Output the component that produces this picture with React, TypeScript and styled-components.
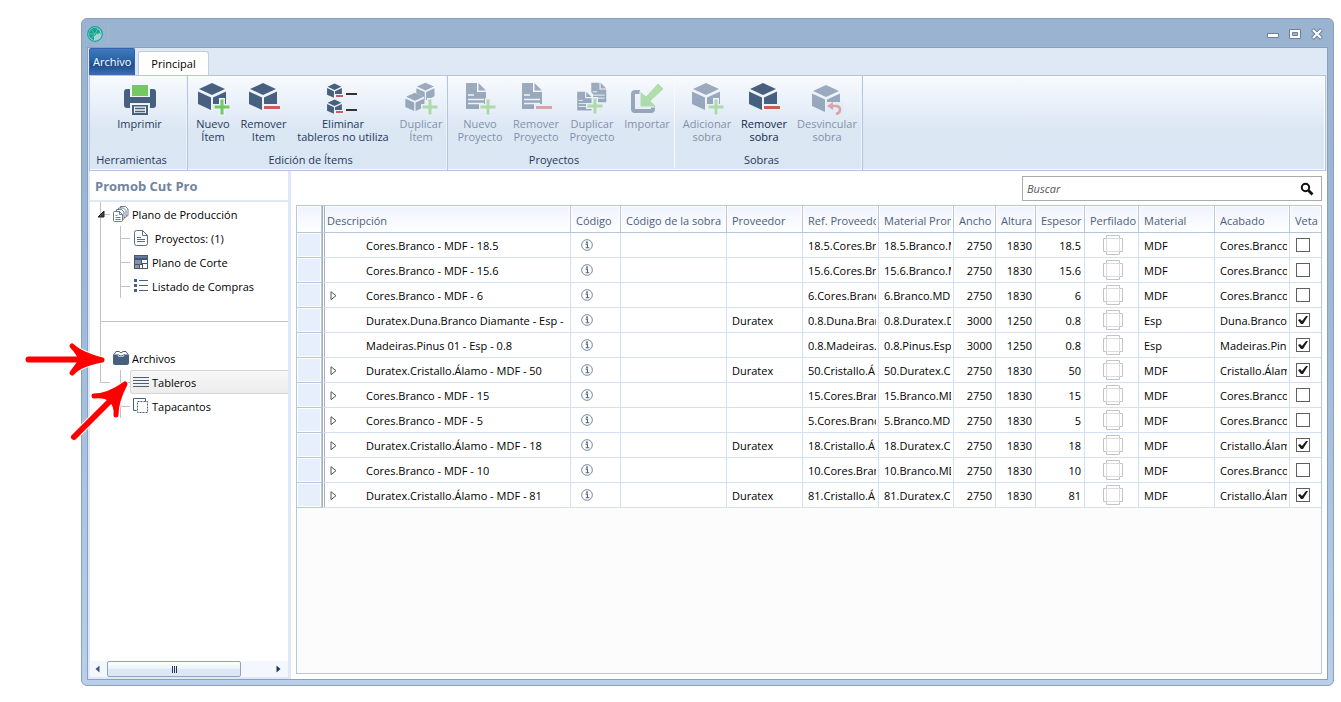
import React from 'react';
import styled, { createGlobalStyle, css } from 'styled-components';

const font = '"Open Sans", "Noto Sans", sans-serif';
const navy = '#48607f';
const green = '#76c661';
const red = '#cb5c58';
const line = '#b8c6d9';
const cellLine = '#d3e1f3';

const GlobalStyle = createGlobalStyle`
  * { box-sizing: border-box; }
  body { margin: 0; background: #fff; }
  body, button, input, table { font: 11px/14px ${font}; color: #000; }
  button { border: 0; padding: 0; background: none; }
  ul { list-style: none; margin: 0; padding: 0; }
`;

const Page = styled.div`
  position: relative;
  display: flex;
  min-height: 100vh;
  padding: 18px 7px 16px 81px;
`;

const Window = styled.div`
  flex: 1;
  min-width: 0;
  display: flex;
  flex-direction: column;
  padding: 0 5px 5px;
  border: 1px solid #8ba0bf;
  border-radius: 6px;
  background: linear-gradient(#9ab3d1, #9db9d6 40%, #b9cfea);
`;

const TitleBar = styled.header`
  display: flex;
  align-items: center;
  height: 28px;
  padding-top: 2px;
  flex: none;
`;

const TitleMark = styled.span`
  display: flex;
  align-items: center;
  width: 22px;
  height: 18px;
  border-right: 1px solid #a7b8cd;
`;

const WindowButtons = styled.div`
  display: flex;
  gap: 10px;
  margin-left: auto;
  padding-right: 5px;
  button, svg { display: block; }
`;

const Client = styled.div`
  flex: 1;
  display: flex;
  flex-direction: column;
  border: 1px solid #8ba0bf;
  background: #dfe8f5;
`;

const Tabs = styled.nav`
  display: flex;
  align-items: flex-end;
  gap: 3px;
  height: 27px;
  padding-left: 1px;
`;

const Tab = styled.button<{ $file?: boolean }>`
  height: 24px;
  padding: 0 12px;
  border: 1px solid #c0cfe4;
  border-bottom: 0;
  border-radius: 3px 3px 0 0;
  background: #fff;
  ${(p) => p.$file && css`
    height: 27px;
    padding: 0 3px;
    color: #fff;
    border-color: #3561b0;
    border-radius: 2px 2px 0 0;
    background: linear-gradient(#3f7abd, #2c64a8 40%, #1f4f8e 62%, #3d6eb9);
  `}
`;

const Ribbon = styled.div`
  display: flex;
  height: 96px;
  margin: 0 1px;
  border: 1px solid #b3c4de;
  background: linear-gradient(#f8fbfe, #e6eef8 35%, #dce7f4 55%, #dae6f3);
  box-shadow: inset -1px -1px #fff, inset 0 1px #fff;
`;

const Group = styled.section<{ $soft?: boolean }>`
  display: flex;
  flex-direction: column;
  border-right: 1px solid ${(p) => (p.$soft ? '#f7fafd' : '#b3c4de')};
  box-shadow: inset -1px 0 ${(p) => (p.$soft ? 'transparent' : '#eef4fb')};
`;

const GroupButtons = styled.div<{ $left?: number; $right?: number }>`
  display: flex;
  flex: 1;
  padding: 6px ${(p) => p.$right || 0}px 0 ${(p) => p.$left || 0}px;
`;

const GroupName = styled.h2`
  margin: 0;
  padding: 0 14px 2px 0;
  font: 11px/17px ${font};
  text-align: center;
  color: #1e395b;
`;

const RibbonButton = styled.button<{ $w: number; $strong?: boolean }>`
  display: flex;
  flex-direction: column;
  align-items: center;
  width: ${(p) => p.$w}px;
  line-height: 13px;
  white-space: pre;
  color: ${(p) => (p.$strong ? '#12284a' : '#1e395b')};
  svg { flex: none; margin-bottom: 1px; }
  &:disabled { opacity: 0.5; }
`;

const Body = styled.div`
  flex: 1;
  display: flex;
`;

const Side = styled.aside`
  width: 203px;
  flex: none;
  display: flex;
  flex-direction: column;
  padding-left: 2px;
  border-right: 3px solid #dfe8f6;
  border-bottom: 2px solid #dfe8f6;
  background: #fff;
  box-shadow: inset 2px 0 #dfe8f6;
`;

const SideTitle = styled.h1`
  margin: 0;
  padding: 1px 0 0 5px;
  font: bold 13px/28px ${font};
  color: #70849c;
  border-bottom: 2px solid #dfe8f6;
`;

const Tree = styled.ul`
  flex: 1;
`;

const Row = styled.li<{ $rule?: boolean }>`
  display: flex;
  height: 24px;
  ${(p) => p.$rule && css`
    background: linear-gradient(#c3c3c3, #c3c3c3) 10px 100% / 100% 1px no-repeat;
  `}
`;

const dot = 'linear-gradient(#c3c3c3, #c3c3c3)';
const guides = {
  none: 'none',
  trunk: `${dot} 10px 0 / 1px 100% no-repeat`,
  stub: `${dot} 100% 12px / 6px 1px no-repeat, ${dot} 10px 0 / 1px 100% no-repeat`,
  elbow: `${dot} 10px 0 / 1px 50% no-repeat, ${dot} 10px 12px / 100% 1px no-repeat`,
  branch: `${dot} 10px 0 / 1px 100% no-repeat, ${dot} 10px 12px / 100% 1px no-repeat`,
};

const Guide = styled.span<{ $kind: keyof typeof guides }>`
  display: flex;
  align-items: center;
  width: 20px;
  padding-left: 6px;
  flex: none;
  background: ${(p) => guides[p.$kind]};
`;

const Node = styled.button<{ $selected?: boolean }>`
  display: flex;
  align-items: center;
  gap: 3px;
  flex: 1;
  padding-left: 2px;
  text-align: left;
  white-space: pre;
  border: 1px solid transparent;
  border-right: 0;
  svg { flex: none; }
  ${(p) => p.$selected && css`
    border-color: #d6d6d6;
    border-radius: 3px 0 0 3px;
    background: linear-gradient(#f8f8f8, #ececec);
  `}
`;

const NodeText = styled.span`
  padding-top: 1px;
`;

const ScrollRow = styled.div`
  display: flex;
  align-items: center;
  height: 16px;
  padding: 0 7px 0 5px;
  background: #f4f8fe;
  button, svg { display: block; }
`;

const ScrollTrack = styled.div`
  flex: 1;
  padding: 0 35px 0 7px;
`;

const Thumb = styled.div`
  display: flex;
  justify-content: center;
  align-items: center;
  gap: 1px;
  height: 16px;
  border: 1px solid #8fa3c0;
  border-radius: 2px;
  background: linear-gradient(#fff, #eaf1f9 48%, #dce7f4 52%, #dde8f5);
  i { width: 1px; height: 7px; background: #1e395b; }
`;

const Main = styled.main`
  flex: 1;
  min-width: 0;
  display: flex;
  flex-direction: column;
  gap: 4px;
  padding: 5px 5px 5px;
  background: #fff;
`;

const SearchBox = styled.label`
  display: flex;
  align-items: center;
  align-self: flex-end;
  width: 300px;
  height: 25px;
  padding: 0 7px 0 4px;
  border: 1px solid #ababab;
  background: #fff;
`;

const SearchInput = styled.input`
  flex: 1;
  border: 0;
  padding: 0;
  outline: 0;
  background: none;
  &::placeholder { color: #555; opacity: 1; font-style: italic; }
`;

const Grid = styled.div`
  flex: 1;
  border: 1px solid ${line};
  background: #fcfcfc;
`;

const Table = styled.table`
  width: 100%;
  table-layout: fixed;
  border-collapse: separate;
  border-spacing: 0;
  background: #fff;
`;

const Col = styled.col<{ $w?: number }>`
  width: ${(p) => (p.$w ? `${p.$w}px` : 'auto')};
`;

const edge = css`
  border-left: 3px double #a3b1c4;
`;

const Th = styled.th<{ $first?: boolean }>`
  height: 27px;
  padding: 4px 2px 0 5px;
  font-weight: normal;
  text-align: left;
  color: #4c607a;
  border: 1px solid ${line};
  border-width: 0 1px 1px 0;
  background: linear-gradient(#eef3fc, #fff);
  box-shadow: inset 1px 1px #fff, inset -1px 0 #fff;
  ${(p) => p.$first && css`${edge} padding-left: 2px;`}
  &:last-child { border-right: 0; }
`;

const Td = styled.td<{ $right?: boolean; $first?: boolean; $center?: boolean; $info?: boolean }>`
  height: 25px;
  padding: ${(p) => (p.$center ? '0 0 0 2px' : p.$right ? '2px 3px 0 5px' : '2px 2px 0 5px')};
  text-align: ${(p) => (p.$right ? 'right' : p.$center ? 'center' : 'left')};
  border: 1px solid ${cellLine};
  border-width: 0 1px 1px 0;
  svg { display: block; ${(p) => p.$center && 'margin: auto;'} }
  ${(p) => p.$first && css`${edge}`}
  ${(p) => p.$info && css`padding: 0 0 0 10px;`}
  &:last-child { border-right: 0; }
`;

const RowHead = styled.th`
  height: 25px;
  padding: 0;
  border: 1px solid ${line};
  border-width: 0 1px 1px 0;
  background: #e7eefc;
  box-shadow: inset 0 0 0 1px #fff;
`;

const Clip = styled.div`
  overflow: hidden;
  white-space: nowrap;
`;

const Name = styled.div`
  display: flex;
  align-items: center;
`;

const Expander = styled.button`
  width: 36px;
  height: 12px;
  flex: none;
`;

const Tick = styled.input`
  appearance: none;
  display: block;
  width: 14px;
  height: 14px;
  margin: 0 0 0 4px;
  border: 1px solid #5f5f5f;
  background: #fff;
  &:checked::before {
    content: '';
    display: block;
    width: 12px;
    height: 12px;
    background: #1a1a1a;
    clip-path: polygon(1px 6px, 3px 5px, 5px 7px, 9px 2px, 11px 2px, 6px 10px, 4px 10px);
  }
`;

const Arrows = styled.svg`
  position: absolute;
  left: 20px;
  top: 335px;
  pointer-events: none;
`;

/* ---- ribbon drawings ---- */

const Cube = ({ x = 0, y = 0, s = 1 }: { x?: number; y?: number; s?: number }) => (
  <g transform={`translate(${x} ${y}) scale(${s})`} fill={navy}>
    <path d="M3 7 16 1l13 6-13 6z" />
    <path d="M2 9.500l13 6V28L2 22z" />
    <path d="M30 9.500l-13 6V28l13-6z" />
  </g>
);

const Plus = ({ x = 26, y = 25 }: { x?: number; y?: number }) => (
  <g transform={`translate(${x} ${y})`}>
    <path d="M-3-9h6v6h6v6h-6v6h-6v-6h-6v-6h6z" fill="#eaf1f9" />
    <path d="M-1.500-7.500h3v6h6v3h-6v6h-3v-6h-6v-3h6z" fill={green} />
  </g>
);

const Minus = () => (
  <g>
    <path d="M15 22h19v6H15z" fill="#eaf1f9" />
    <path d="M17 24h16v3H17z" fill={red} />
  </g>
);

const Sheet = ({ x = 0, y = 0, s = 1 }: { x?: number; y?: number; s?: number }) => (
  <g transform={`translate(${x} ${y}) scale(${s})`}>
    <path d="M3 1h11v9h9v17H3z" fill={navy} />
    <path d="M15.500 1l7.500 7.500h-7.500z" fill={navy} />
    <path d="M5 13h6M5 17.500h16M5 21.500h16" stroke="#f0f5fb" strokeWidth="1.300" fill="none" />
  </g>
);

const drawings: Record<string, React.ReactNode> = {
  printer: (
    <>
      <path d="M4 7h3v8h20V7h3q3 0 3 3v13q0 3-3 3h-3v-5H7v5H4q-3 0-3-3V10q0-3 3-3z" fill={navy} />
      <path d="M9 3h16v11H9z" fill={green} />
      <path d="M8 22h18v11H8z" fill="#f1f6fb" />
      <path d="M9 23h16v10H9z" fill={navy} />
      <path d="M11 24.500h12v6.500H11z" fill="#f1f6fb" />
      <path d="M12 26.500h10M12 29.500h10" stroke={navy} strokeWidth="1.500" />
    </>
  ),
  cubePlus: <><Cube /><Plus /></>,
  cubeMinus: <><Cube /><Minus /></>,
  purge: (
    <>
      <Cube y={1} s={0.53} />
      <Cube y={17} s={0.53} />
      <path d="M9 12h9v4H9zM9 28h9v4H9z" fill="#f1f6fb" />
      <path d="M10 13h7v2h-7zM10 29h7v2h-7z" fill={red} />
      <path d="M20 11h11v2H20zM20 27h11v2H20z" fill="#333" />
    </>
  ),
  cubesPlus: (
    <>
      <Cube x={11} s={0.65} />
      <path d="M1 15l9-5 10 5v8H1z" fill="#eef4fa" />
      <Cube y={10} s={0.68} />
      <Plus />
    </>
  ),
  sheetPlus: <><Sheet /><Plus x={25} /></>,
  sheetMinus: <><Sheet /><Minus /></>,
  sheetsPlus: (
    <>
      <Sheet x={14} s={0.75} />
      <path d="M1 8h13l4 4v18H1z" fill="#eef4fa" />
      <Sheet y={9} s={0.72} />
      <Plus x={20} y={24} />
    </>
  ),
  importArrow: (
    <>
      <path d="M10 10H5q-2 0-2 2v15q0 2 2 2h16q2 0 2-2v-2" fill="none" stroke={navy} strokeWidth="4" />
      <path d="M10 9l6 5L28 1l6 6-13 12 6 6H10z" fill={green} stroke="#edf3fa" strokeWidth="1" />
    </>
  ),
  cubeUndo: (
    <>
      <Cube y={2} />
      <path d="M16 20h18v13H16z" fill="#e2ebf6" />
      <path d="M20 24h6q4 0 4 4 0 3-4 4" fill="none" stroke={red} strokeWidth="2.500" />
      <path d="M17 24l6-4v8z" fill={red} />
    </>
  ),
};

const BigIcon = ({ name }: { name: string }) => (
  <svg width="34" height="34" viewBox="0 0 34 34" aria-hidden="true">{drawings[name]}</svg>
);

type Action = { label: string; icon: string; w: number; off?: boolean; strong?: boolean };
const groups: { name: string; left?: number; right?: number; soft?: boolean; actions: Action[] }[] = [
  { name: 'Herramientas', left: 2, actions: [{ label: 'Imprimir', icon: 'printer', w: 95 }] },
  {
    name: 'Edición de Ítems', right: 2, actions: [
      { label: 'Nuevo\nÍtem', icon: 'cubePlus', w: 50 },
      { label: 'Remover\nItem', icon: 'cubeMinus', w: 51 },
      { label: 'Eliminar\ntableros no utiliza', icon: 'purge', w: 108 },
      { label: 'Duplicar\nÍtem', icon: 'cubesPlus', w: 48, off: true },
    ],
  },
  {
    name: 'Proyectos', left: 4, soft: true, actions: [
      { label: 'Nuevo\nProyecto', icon: 'sheetPlus', w: 56, off: true },
      { label: 'Remover\nProyecto', icon: 'sheetMinus', w: 56, off: true },
      { label: 'Duplicar\nProyecto', icon: 'sheetsPlus', w: 56, off: true },
      { label: 'Importar', icon: 'importArrow', w: 54, off: true },
    ],
  },
  {
    name: 'Sobras', left: 3, actions: [
      { label: 'Adicionar\nsobra', icon: 'cubePlus', w: 58, off: true },
      { label: 'Remover\nsobra', icon: 'cubeMinus', w: 56, strong: true },
      { label: 'Desvincular\nsobra', icon: 'cubeUndo', w: 70, off: true },
    ],
  },
];

/* ---- tree drawings ---- */

const treeIcons: Record<string, React.ReactNode> = {
  stack: (
    <g fill="#fff" stroke={navy} strokeWidth=".8">
      <path d="M7.500.500h5l2.500 2.500v6q0 1-1 1H7.500z" />
      <path d="M5.500 2h5L13 4.500v6q0 1-1 1H5.500z" />
      <path d="M3.500 3.500h5L11 6v6.500q0 1-1 1H3.500z" />
      <path d="M1.500 5.500h5l3 3v6q0 1-1 1h-7q-1 0-1-1v-8q0-1 1-1z" />
      <path d="M6.500 5.500v3h3M2.500 9.500h2M2.500 11.500h5M2.500 13.500h5" fill="none" />
    </g>
  ),
  page: (
    <g fill="none" stroke={navy} strokeWidth=".9">
      <path d="M3.500.500h6l5 5v8q0 2-2 2h-9q-2 0-2-2v-11q0-2 2-2zM9.500.500v5h5M4 7.500h4M4 9.500h8M4 11.500h8" />
    </g>
  ),
  plan: (
    <>
      <path d="M1 1h14v14H1z" fill="#4b5563" />
      <path d="M2 2h12v2H2z" fill="#5c7ba6" />
      <path d="M2 6h6v4H2z" fill="#7d93b3" />
      <path d="M9 6h5v3H9zM7 11h2v3H7zM10 10h4v4h-4z" fill="#fff" />
      <path d="M2 11h4v3H2z" fill="#8a98ab" />
    </>
  ),
  list: (
    <>
      <path d="M1 1h3v3H1zM1 6h3v3H1zM1 11h3v3H1z" fill={navy} />
      <path d="M6 2.500h9M6 7.500h9M6 12.500h9" stroke={navy} />
    </>
  ),
  drawer: (
    <>
      <path d="M0 4.500h4.500q0 2.500 3.500 2.500t3.500-2.500H16V13q0 2-2 2H2q-2 0-2-2z" fill={navy} />
      <path d="M1 4.500L3 1.500h3l2 1.500 2-1.500h3l2 3M4.500 4q1 2 3.500 2t3.500-2" fill="none" stroke={navy} />
    </>
  ),
  boards: <path d="M0 3.500h16M0 6.500h16M0 9.500h16M0 12.500h16" stroke={navy} strokeWidth="1" />,
  edges: (
    <g fill="none" stroke={navy}>
      <path d="M3.500 12.500h-3V.500h12v3" />
      <path d="M4.500 3.500h10v11h-10z" strokeDasharray="2 1" />
    </g>
  ),
};

const TreeNode = ({ icon, text, selected }: { icon: string; text: string; selected?: boolean }) => (
  <Node $selected={selected}>
    <svg width="16" height="16" viewBox="0 0 16 16" aria-hidden="true">{treeIcons[icon]}</svg>
    <NodeText>{text}</NodeText>
  </Node>
);

/* ---- grid data ---- */

const columns: { title: string; w?: number }[] = [
  { title: 'Descripción' },
  { title: 'Código', w: 50 },
  { title: 'Código de la sobra', w: 106 },
  { title: 'Proveedor', w: 76 },
  { title: 'Ref. Proveedor', w: 76 },
  { title: 'Material Prom', w: 75 },
  { title: 'Ancho', w: 42 },
  { title: 'Altura', w: 40 },
  { title: 'Espesor', w: 49 },
  { title: 'Perfilado', w: 54 },
  { title: 'Material', w: 76 },
  { title: 'Acabado', w: 75 },
  { title: 'Veta', w: 31 },
];

type Board = [boolean, string, string, string, string, string, string, string, string, string, boolean];
const boards: Board[] = [
  [false, 'Cores.Branco - MDF - 18.5', '', '18.5.Cores.Bra', '18.5.Branco.M', '2750', '1830', '18.5', 'MDF', 'Cores.Branco', false],
  [false, 'Cores.Branco - MDF - 15.6', '', '15.6.Cores.Bra', '15.6.Branco.M', '2750', '1830', '15.6', 'MDF', 'Cores.Branco', false],
  [true, 'Cores.Branco - MDF - 6', '', '6.Cores.Branco', '6.Branco.MD', '2750', '1830', '6', 'MDF', 'Cores.Branco', false],
  [false, 'Duratex.Duna.Branco Diamante - Esp -', 'Duratex', '0.8.Duna.Bran', '0.8.Duratex.D', '3000', '1250', '0.8', 'Esp', 'Duna.Branco', true],
  [false, 'Madeiras.Pinus 01 - Esp - 0.8', '', '0.8.Madeiras.', '0.8.Pinus.Esp', '3000', '1250', '0.8', 'Esp', 'Madeiras.Pin', true],
  [true, 'Duratex.Cristallo.Álamo - MDF - 50', 'Duratex', '50.Cristallo.Á', '50.Duratex.Cr', '2750', '1830', '50', 'MDF', 'Cristallo.Álam', true],
  [true, 'Cores.Branco - MDF - 15', '', '15.Cores.Bran', '15.Branco.MD', '2750', '1830', '15', 'MDF', 'Cores.Branco', false],
  [true, 'Cores.Branco - MDF - 5', '', '5.Cores.Branco', '5.Branco.MD', '2750', '1830', '5', 'MDF', 'Cores.Branco', false],
  [true, 'Duratex.Cristallo.Álamo - MDF - 18', 'Duratex', '18.Cristallo.Á', '18.Duratex.Cr', '2750', '1830', '18', 'MDF', 'Cristallo.Álam', true],
  [true, 'Cores.Branco - MDF - 10', '', '10.Cores.Bran', '10.Branco.MD', '2750', '1830', '10', 'MDF', 'Cores.Branco', false],
  [true, 'Duratex.Cristallo.Álamo - MDF - 81', 'Duratex', '81.Cristallo.Á', '81.Duratex.Cr', '2750', '1830', '81', 'MDF', 'Cristallo.Álam', true],
];

const BoardRow = ({ board }: { board: Board }) => {
  const [open, name, supplier, ref, promob, width, height, thick, material, finish, grain] = board;
  return (
    <tr>
      <RowHead />
      <Td $first>
        <Name>
          <Expander as={open ? 'button' : 'span'} aria-label={open ? 'Expandir' : undefined}>
            {open && (
              <svg width="8" height="10" viewBox="0 0 8 10">
                <path d="M1 .700v8L6 4.700z" fill="#fff" stroke="#555" />
              </svg>
            )}
          </Expander>
          <Clip>{name}</Clip>
        </Name>
      </Td>
      <Td $info>
        <svg width="12" height="12" viewBox="0 0 13 13">
          <circle cx="6.500" cy="6.500" r="5.800" fill="#fff" stroke="#6d8098" />
          <path d="M5 5.500h2v4M5 9.500h4" fill="none" stroke="#54687f" strokeWidth="1.300" />
          <circle cx="6.500" cy="3.500" r="1" fill="#54687f" />
        </svg>
      </Td>
      <Td />
      <Td><Clip>{supplier}</Clip></Td>
      <Td><Clip>{ref}</Clip></Td>
      <Td><Clip>{promob}</Clip></Td>
      <Td $right>{width}</Td>
      <Td $right>{height}</Td>
      <Td $right>{thick}</Td>
      <Td $center>
        <svg width="20" height="20" viewBox="0 0 20 20" fill="none" stroke="#c4c4c4">
          <path d="M3.500.500h13v19h-13zM.500 3.500h19v13H.500z" />
          <path d="M3.500 3.500h13v13h-13z" fill="#fff" stroke="#dcdcdc" />
        </svg>
      </Td>
      <Td><Clip>{material}</Clip></Td>
      <Td><Clip>{finish}</Clip></Td>
      <Td $center><Tick type="checkbox" defaultChecked={grain} aria-label="Veta" /></Td>
    </tr>
  );
};

export default function App() {
  return (
    <Page>
      <GlobalStyle />
      <Window>
        <TitleBar>
          <TitleMark>
            <svg width="16" height="16" viewBox="0 0 16 16">
              <circle cx="8" cy="8" r="7.300" fill="#a9d3d3" stroke="#15a596" strokeWidth="1.200" />
              <path d="M8 1.800A6.200 6.200 0 0 0 7 14.100V10l2-1 .500-2 1.500 1.500 1-2 1.500 2A6.200 6.200 0 0 0 8 1.800z" fill="#12a591" />
              <path d="M4 3.500l4 4.500 3-5.500M8 8H2M8 8l-4 5" stroke="#7fcdc4" strokeWidth=".6" fill="none" />
            </svg>
          </TitleMark>
          <WindowButtons>
            <button aria-label="Minimizar">
              <svg width="12" height="12" viewBox="0 0 12 12"><path d="M.500 5.500h11v4H.500z" fill="#fff" stroke="#6f7f95" /></svg>
            </button>
            <button aria-label="Restaurar">
              <svg width="12" height="12" viewBox="0 0 12 12">
                <path d="M.500 1.500h11v9H.500z" fill="#fff" stroke="#6f7f95" />
                <path d="M3.500 4.500h5v3h-5z" fill="#9ab3d1" stroke="#6f7f95" />
              </svg>
            </button>
            <button aria-label="Cerrar">
              <svg width="12" height="12" viewBox="0 0 12 12">
                <path d="M1.500 1.500l9 9M10.500 1.500l-9 9" stroke="#6f7f95" strokeWidth="4" />
                <path d="M2 2l8 8M10 2l-8 8" stroke="#fff" strokeWidth="2" />
              </svg>
            </button>
          </WindowButtons>
        </TitleBar>
        <Client>
          <Tabs>
            <Tab $file>Archivo</Tab>
            <Tab>Principal</Tab>
          </Tabs>
          <Ribbon>
            {groups.map((g) => (
              <Group key={g.name} $soft={g.soft}>
                <GroupButtons $left={g.left} $right={g.right}>
                  {g.actions.map((a) => (
                    <RibbonButton key={a.label} $w={a.w} $strong={a.strong} disabled={a.off}>
                      <BigIcon name={a.icon} />
                      {a.label}
                    </RibbonButton>
                  ))}
                </GroupButtons>
                <GroupName>{g.name}</GroupName>
              </Group>
            ))}
          </Ribbon>
          <Body>
            <Side>
              <SideTitle>Promob Cut Pro</SideTitle>
              <Tree>
                <Row>
                  <Guide $kind="stub">
                    <svg width="10" height="10" viewBox="0 0 10 10"><path d="M8 2v6H2z" fill="#404040" stroke="#222" /></svg>
                  </Guide>
                  <TreeNode icon="stack" text="Plano de Producción" />
                </Row>
                <Row>
                  <Guide $kind="trunk" /><Guide $kind="branch" />
                  <TreeNode icon="page" text=" Proyectos: (1)" />
                </Row>
                <Row>
                  <Guide $kind="trunk" /><Guide $kind="branch" />
                  <TreeNode icon="plan" text="Plano de Corte" />
                </Row>
                <Row>
                  <Guide $kind="trunk" /><Guide $kind="branch" />
                  <TreeNode icon="list" text="Listado de Compras" />
                </Row>
                <Row $rule><Guide $kind="trunk" /></Row>
                <Row><Guide $kind="trunk" /></Row>
                <Row>
                  <Guide $kind="trunk" />
                  <TreeNode icon="drawer" text="Archivos" />
                </Row>
                <Row>
                  <Guide $kind="elbow" /><Guide $kind="branch" />
                  <TreeNode icon="boards" text="Tableros" selected />
                </Row>
                <Row>
                  <Guide $kind="none" /><Guide $kind="branch" />
                  <TreeNode icon="edges" text="Tapacantos" />
                </Row>
              </Tree>
              <ScrollRow>
                <button aria-label="Desplazar a la izquierda">
                  <svg width="5" height="8" viewBox="0 0 5 8"><path d="M4.500.500v7L.500 4z" fill="#44597a" /></svg>
                </button>
                <ScrollTrack><Thumb><i /><i /><i /></Thumb></ScrollTrack>
                <button aria-label="Desplazar a la derecha">
                  <svg width="5" height="8" viewBox="0 0 5 8"><path d="M.500.500v7L4.500 4z" fill="#1e395b" /></svg>
                </button>
              </ScrollRow>
            </Side>
            <Main>
              <SearchBox>
                <SearchInput type="text" placeholder="Buscar" aria-label="Buscar" />
                <svg width="14" height="14" viewBox="0 0 14 14" fill="none" stroke="#111">
                  <circle cx="5.500" cy="5.500" r="3.700" strokeWidth="2" />
                  <path d="M8.500 8.500l4 4" strokeWidth="2.800" />
                </svg>
              </SearchBox>
              <Grid>
                <Table>
                  <colgroup>
                    <Col $w={25} />
                    {columns.map((c) => <Col key={c.title} $w={c.w} />)}
                  </colgroup>
                  <thead>
                    <tr>
                      <Th />
                      {columns.map((c, i) => (
                        <Th key={c.title} $first={i === 0}><Clip>{c.title}</Clip></Th>
                      ))}
                    </tr>
                  </thead>
                  <tbody>
                    {boards.map((b, i) => <BoardRow key={i} board={b} />)}
                  </tbody>
                </Table>
              </Grid>
            </Main>
          </Body>
        </Client>
      </Window>
      <Arrows width="120" height="112" viewBox="0 0 120 112" fill="none" strokeLinecap="round" strokeLinejoin="round" aria-hidden="true">
        {['#fff', '#fe0000'].map((c, i) => (
          <g key={c} stroke={c} fill={c}>
            <path d="M8.500 24.500h62" strokeWidth={i ? 6 : 8} />
            <path d="M52 11Q60 19 82 25Q60 29 52 38Q58 30 61 25Q59 18 52 11z" strokeWidth={i ? 5 : 7} />
            <path d="M54 102L96 60" strokeWidth={i ? 6 : 8} />
            <path d="M74 61Q88 61 105 49Q96 66 96 80Q97 70 91 65Q86 60 74 61z" strokeWidth={i ? 5 : 7} />
          </g>
        ))}
      </Arrows>
    </Page>
  );
}
